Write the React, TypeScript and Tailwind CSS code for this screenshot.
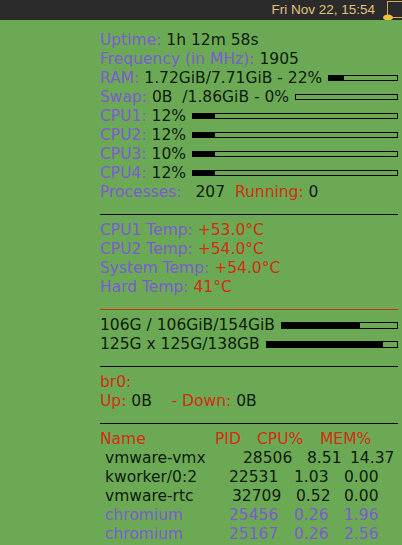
import React from "react";

const P = "text-[#7b5bd2]";
const R = "text-[#d22e10]";
const K = "text-[#0c1c0c]";

function Bar({ pct, h = "h-[6px]" }: { pct: number; h?: string }) {
  return (
    <div className={`flex-1 ${h} border border-black ml-[6px]`}>
      <div className="h-full bg-black" style={{ width: `${pct}%` }} />
    </div>
  );
}

function Line({ children }: { children: React.ReactNode }) {
  return <div className="h-[19px] flex items-center whitespace-pre">{children}</div>;
}

function Rule({ red }: { red?: boolean }) {
  return (
    <div className="h-[19px] pt-[12px]">
      <div className={`h-px ${red ? "bg-[#c8300e]" : "bg-black"}`} />
    </div>
  );
}

const cpus = [
  ["CPU1", 12],
  ["CPU2", 12],
  ["CPU3", 10],
  ["CPU4", 12],
] as const;

export default function App() {
  return (
    <div className="w-[402px] h-[545px] bg-[#6ca955] overflow-hidden" style={{ fontFamily: '"DejaVu Sans", sans-serif' }}>
      {/* panel */}
      <div className="h-[20px] bg-[#2b2b2b] flex items-center justify-end">
        <span className="text-[#e4c27c] text-[13.5px] mr-[7px]" style={{ fontFamily: '"Liberation Sans", sans-serif' }}>
          Fri Nov 22, 15:54
        </span>
        <svg width="20" height="20" viewBox="0 0 20 20" className="shrink-0">
          <rect x="5.5" y="1.5" width="16" height="16" fill="none" stroke="#d9ab57" strokeWidth="1" />
          <ellipse cx="6" cy="17.5" rx="5" ry="3" fill="#f0c040" />
        </svg>
      </div>

      <div className="pl-[100px] w-[398px] pt-[10.5px] text-[15.5px] leading-[19px]">
        <Line>
          <span className={P}>Uptime:</span>
          <span className={K}> 1h 12m 58s</span>
        </Line>
        <Line>
          <span className={P}>Frequency (in MHz):</span>
          <span className={K}> 1905</span>
        </Line>
        <Line>
          <span className={P}>RAM:</span>
          <span className={K}> 1.72GiB/7.71GiB - 22%</span>
          <Bar pct={22} />
        </Line>
        <Line>
          <span className={P}>Swap:</span>
          <span className={K}> 0B  /1.86GiB - 0%</span>
          <Bar pct={0} />
        </Line>
        {cpus.map(([n, v]) => (
          <Line key={n}>
            <span className={P}>{n}:</span>
            <span className={K}> {v}%</span>
            <Bar pct={11} />
          </Line>
        ))}
        <Line>
          <span className={P}>Processes:</span>
          <span className={`${K} pl-[4px]`}>  207 </span>
          <span className={R}> Running:</span>
          <span className={K}> 0</span>
        </Line>

        <Rule />

        <Line>
          <span className={P}>CPU1 Temp:</span>
          <span className={R}> +53.0°C</span>
        </Line>
        <Line>
          <span className={P}>CPU2 Temp:</span>
          <span className={R}> +54.0°C</span>
        </Line>
        <Line>
          <span className={P}>System Temp:</span>
          <span className={R}> +54.0°C</span>
        </Line>
        <Line>
          <span className={P}>Hard Temp:</span>
          <span className={R}> 41°C</span>
        </Line>

        <Rule red />

        <Line>
          <span className={K}>106G / 106GiB/154GiB</span>
          <Bar pct={68} h="h-[7px]" />
        </Line>
        <Line>
          <span className={K}>125G x 125G/138GB</span>
          <Bar pct={89} h="h-[7px]" />
        </Line>

        <Rule />

        <Line>
          <span className={R}>br0:</span>
        </Line>
        <Line>
          <span className={R}>Up:</span>
          <span className={K}> 0B    </span>
          <span className={R}>- Down:</span>
          <span className={K}> 0B</span>
        </Line>

        <Rule />

        <Line>
          <span className={`${R} w-[115px]`}>Name</span>
          <span className={`${R} w-[42px]`}>PID</span>
          <span className={`${R} w-[63px]`}>CPU%</span>
          <span className={R}>MEM%</span>
        </Line>
        <Line>
          <span className={`${K} pl-[5px] w-[143px]`}>vmware-vmx</span>
          <span className={`${K} w-[64px]`}>28506</span>
          <span className={`${K} w-[43px]`}>8.51</span>
          <span className={K}>14.37</span>
        </Line>
        <Line>
          <span className={`${K} pl-[5px] w-[129px]`}>kworker/0:2</span>
          <span className={`${K} w-[65px]`}>22531</span>
          <span className={`${K} w-[50px]`}>1.03</span>
          <span className={K}>0.00</span>
        </Line>
        <Line>
          <span className={`${K} pl-[5px] w-[132px]`}>vmware-rtc</span>
          <span className={`${K} w-[64px]`}>32709</span>
          <span className={`${K} w-[48px]`}>0.52</span>
          <span className={K}>0.00</span>
        </Line>
        <Line>
          <span className={`${P} pl-[5px] w-[129px]`}>chromium</span>
          <span className={`${P} w-[65px]`}>25456</span>
          <span className={`${P} w-[50px]`}>0.26</span>
          <span className={P}>1.96</span>
        </Line>
        <Line>
          <span className={`${P} pl-[5px] w-[129px]`}>chromium</span>
          <span className={`${P} w-[65px]`}>25167</span>
          <span className={`${P} w-[50px]`}>0.26</span>
          <span className={P}>2.56</span>
        </Line>
      </div>
    </div>
  );
}
